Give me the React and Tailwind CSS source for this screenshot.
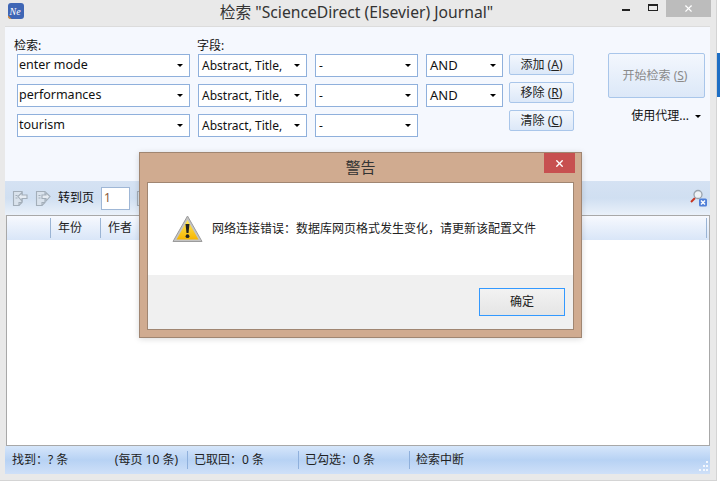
import { X } from 'lucide-react'

const police = { fontFamily: '"Noto Sans", "Noto Sans CJK SC", sans-serif' }

function Liste({ texte, className }) {
  return (
    <div className={`flex h-[23px] items-center border border-[#8fb0dc] bg-white text-[#111] ${className}`}>
      <span className="whitespace-nowrap">{texte}</span>
      <span className="ml-auto mr-[6px] h-0 w-0 border-x-[3px] border-t-[3px] border-x-transparent border-t-black" />
    </div>
  )
}

function Bouton({ children }) {
  return (
    <div className="flex h-[21px] w-[65px] items-center justify-center rounded-[2px] border border-[#a9c6ea] bg-gradient-to-b from-[#f3f7fd] to-[#dce8f8] text-[12px] text-[#222]">
      {children}
    </div>
  )
}

function Ligne({ terme, operateur }) {
  return (
    <div className="flex gap-2">
      <Liste texte={terme} className="w-[173px] pl-[1px] text-[12.5px]" />
      <Liste texte="Abstract, Title," className="w-[109px] pl-[3px] text-[12px]" />
      <Liste texte="-" className="w-[103px] pl-[3px] text-[12px]" />
      {operateur ? <Liste texte="AND" className="w-[77px] pl-[3px] text-[13px]" /> : <div className="w-[77px]" />}
    </div>
  )
}

function IconePage({ sens }) {
  return (
    <svg width="16" height="17" viewBox="0 0 16 17" fill="none" stroke="#a3aeb9" strokeWidth="1.1">
      <path d="M1.5 1.5h8.5v11l-3 3h-5.5z" fill="#d9e2ec" />
      <path d="M7 15.5v-3h3" />
      {sens === 'gauche' ? (
        <path d="M6 6.5 10 2.5v2.5h5v3.5h-5v2.5z" fill="#e6ecf3" />
      ) : (
        <path d="M15 6.5 11 2.5v2.5H7v3.5h4v2.5z" fill="#e6ecf3" />
      )}
      <path d="M3.5 5.5h2M3.5 8h2" />
    </svg>
  )
}

function Triangle() {
  return (
    <svg width="31" height="28" viewBox="0 0 31 28">
      <defs>
        <linearGradient id="jaune" x1="0" y1="0" x2="0" y2="1">
          <stop offset="0" stopColor="#ffe95c" />
          <stop offset="1" stopColor="#f7b500" />
        </linearGradient>
      </defs>
      <path d="M15.5 1 30 26.5H1z" fill="#c4c4c4" stroke="#9c9c9c" strokeLinejoin="round" />
      <path d="M15.5 5 26.5 24.5H4.5z" fill="url(#jaune)" />
      <path d="M13.5 9h4l-1 9h-2z" fill="#222" />
      <circle cx="15.5" cy="21.2" r="1.9" fill="#222" />
    </svg>
  )
}

function Loupe() {
  return (
    <svg width="17" height="18" viewBox="0 0 17 18">
      <path d="M1 13 5 9" stroke="#c8321e" strokeWidth="2" />
      <circle cx="8" cy="5.5" r="4" fill="#eef2f6" stroke="#9aa3ad" strokeWidth="1.3" />
      <rect x="9" y="9.5" width="8" height="8" rx="1.5" fill="#4f7fd8" />
      <path d="m11 11.5 4 4m0-4-4 4" stroke="#fff" strokeWidth="1.5" />
    </svg>
  )
}

function Logo() {
  return (
    <svg width="16" height="16" viewBox="0 0 16 16" className="absolute left-[8px] top-[3px]">
      <rect width="16" height="16" rx="3" fill="#3f66b5" />
      <path d="M0 12.5 3.5 16H3a3 3 0 0 1-3-3z" fill="#f0932b" />
      <text x="1.5" y="11.5" fontSize="10" fontStyle="italic" fontFamily="Liberation Serif, serif" fill="#fff">Ne</text>
    </svg>
  )
}

function Poignee() {
  return (
    <svg width="11" height="11" viewBox="0 0 11 11" fill="#f4f8fe" className="absolute bottom-[2px] right-[1px]">
      <rect x="8" y="0" width="2" height="2" />
      <rect x="5" y="4" width="2" height="2" />
      <rect x="8" y="4" width="2" height="2" />
      <rect x="1" y="8" width="2" height="2" />
      <rect x="5" y="8" width="2" height="2" />
      <rect x="8" y="8" width="2" height="2" />
    </svg>
  )
}

export default function App() {
  return (
    <div style={police} className="relative flex h-[484px] w-[720px] overflow-hidden bg-white">
      <div className="flex h-[481px] w-[717px] shrink-0 flex-col border-b border-r border-[#d4d4d4] bg-[#e9e9e9]">
        <div className="relative flex h-[26px] shrink-0 items-center justify-center text-[15.7px] text-[#333]">
          <Logo />
          <span className="pr-[3px]">检索 "ScienceDirect (Elsevier) Journal"</span>
          <div className="absolute right-[5px] top-0 flex items-start">
            <div className="mr-[18px] mt-[9px] h-[2px] w-[8px] bg-[#222]" />
            <div className="mr-[8px] mt-[4px] h-[7px] w-[10px] border border-t-2 border-[#222]" />
            <div className="flex h-[17px] w-[45px] items-center justify-center bg-[#bcbcbc]">
              <X size={11} strokeWidth={2.5} className="text-white" />
            </div>
          </div>
        </div>

        <div className="mb-[6px] ml-[5px] flex w-[705px] flex-1 flex-col border-t border-[#dcdcdc]">
          <div className="flex h-[154px] shrink-0 gap-[6px] bg-[#f5f8fe] pl-[12px]">
            <div>
              <div className="flex h-[27px] items-end text-[12px] leading-[16px] text-[#111]">
                <span className="-ml-[3px] w-[183px]">检索:</span>
                <span>字段:</span>
              </div>
              <div className="flex flex-col gap-[7px]">
                <Ligne terme="enter mode" operateur />
                <Ligne terme="performances" operateur />
                <Ligne terme="tourism" />
              </div>
            </div>
            <div className="flex flex-col gap-[7px] pt-[27px]">
              <Bouton>添加 (<u>A</u>)</Bouton>
              <Bouton>移除 (<u>R</u>)</Bouton>
              <Bouton>清除 (<u>C</u>)</Bouton>
            </div>
            <div className="ml-[28px] pt-[26px]">
              <div className="flex h-[45px] w-[97px] items-center justify-center rounded-[2px] border border-[#a9c6ea] bg-gradient-to-b from-[#f3f7fd] to-[#dce8f8] pr-[3px] text-[12px] text-[#8a8a8a]">
                开始检索 (<u>S</u>)
              </div>
              <div className="mt-[9px] flex items-center justify-end gap-[6px] pr-[4px] text-[12px] text-[#111]">
                <span>使用代理...</span>
                <span className="h-0 w-0 border-x-[3px] border-t-[3px] border-x-transparent border-t-black" />
              </div>
            </div>
          </div>

          <div className="flex h-[34px] shrink-0 items-center bg-gradient-to-b from-[#d5e2f3] via-[#d0dff1] to-[#eaf1fa] pl-[7px] pr-[3px] text-[12px] text-[#111]">
            <IconePage sens="gauche" />
            <span className="ml-[7px]"><IconePage sens="droite" /></span>
            <span className="ml-[7px]">转到页</span>
            <div className="ml-[7px] flex h-[23px] w-[29px] items-center border border-[#9fb7d6] bg-white pl-[2px] text-[#8a5a3a]">1</div>
            <span className="ml-[6px]"><IconePage sens="gauche" /></span>
            <span className="ml-auto"><Loupe /></span>
          </div>

          <div className="ml-[1px] flex flex-1 flex-col border border-[#a8a8a8] bg-white">
            <div className="flex h-[24px] shrink-0 items-center bg-gradient-to-b from-[#f7f9fe] to-[#d9e6f8] text-[12px] text-[#222]">
              <div className="h-[20px] w-[44px] border-r border-[#9ab4d4]" />
              <div className="flex h-[20px] w-[50px] items-center border-r border-[#9ab4d4] pl-[7px]">年份</div>
              <div className="pl-[7px]">作者</div>
              <div className="ml-auto mr-[2px] h-[20px] border-r border-[#9ab4d4]" />
            </div>
          </div>

          <div className="relative flex h-[28px] shrink-0 items-center bg-gradient-to-b from-[#d6e6fa] via-[#b7d2f4] to-[#cfe0f8] text-[12px] text-[#222]">
            <div className="flex h-[18px] w-[183px] items-center border-r border-[#8fb0dc] pl-[7px]">
              <span>找到：? 条</span>
              <span className="ml-auto pr-[9px]">(每页 10 条)</span>
            </div>
            <div className="flex h-[18px] w-[111px] items-center border-r border-[#8fb0dc] pl-[6px]">已取回：0 条</div>
            <div className="flex h-[18px] w-[111px] items-center border-r border-[#8fb0dc] pl-[6px]">已勾选：0 条</div>
            <div className="pl-[6px]">检索中断</div>
            <Poignee />
          </div>
        </div>
      </div>

      <div className="flex w-[3px] flex-col">
        <div className="h-[53px]" />
        <div className="h-[44px] bg-[#1f6fc4]" />
      </div>

      <div className="absolute left-[139px] top-[152px] flex h-[186px] w-[443px] flex-col border border-[#a08672] bg-[#d0ab90] shadow-[0_1px_6px_rgba(0,0,0,0.15)]">
        <div className="relative flex h-[29px] shrink-0 items-center justify-center text-[15px] text-[#333]">
          <span>警告</span>
          <div className="absolute right-[6px] top-0 flex h-[20px] w-[31px] items-center justify-center bg-[#c75050]">
            <X size={11} strokeWidth={3} className="text-white" />
          </div>
        </div>
        <div className="mx-[7px] flex h-[148px] flex-col border border-[#a08672] bg-white">
          <div className="flex h-[92px] shrink-0 items-center pl-[24px] text-[12px] text-[#222]">
            <Triangle />
            <span className="-mt-[1px] ml-[9px]">网络连接错误：数据库网页格式发生变化，请更新该配置文件</span>
          </div>
          <div className="flex flex-1 items-start justify-end bg-[#f0f0f0] pr-[8px] pt-[13px]">
            <div className="flex h-[28px] w-[86px] items-center justify-center border border-[#3399ff] bg-gradient-to-b from-[#f2f2f2] to-[#e5e5e5] text-[12px] text-[#222]">
              确定
            </div>
          </div>
        </div>
      </div>
    </div>
  )
}
